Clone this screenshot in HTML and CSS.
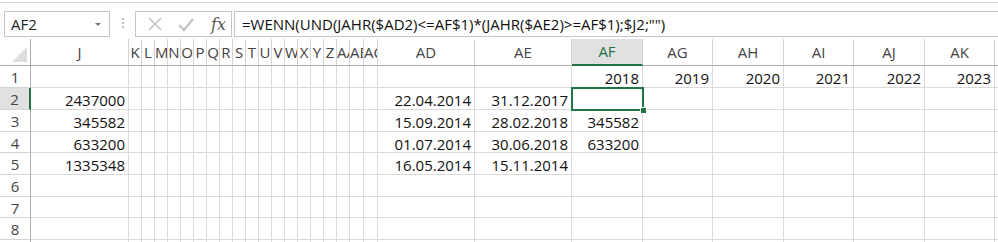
FILE: index.html
```html
<!DOCTYPE html>
<html lang="de">
<head>
  <meta charset="UTF-8" />
  <title>Tabelle</title>
  <link rel="stylesheet" href="styles.css">
</head>
<body>
  <div class="topbar">
    <div class="namebox">
      <span>AF2</span>
      <span class="arrow"></span>
    </div>
    <div class="grip"><i></i><i></i><i></i></div>
    <div class="fxbox">
      <svg class="ico" width="16" height="16" viewBox="0 0 16 16"><path d="M2 2 L14 14 M14 2 L2 14" stroke="#c4c4c4" stroke-width="1.6" fill="none"/></svg>
      <svg class="ico" width="18" height="16" viewBox="0 0 18 16"><path d="M2 9 L7 14 L16 3" stroke="#c4c4c4" stroke-width="2.4" fill="none"/></svg>
      <span class="fx">fx</span>
    </div>
    <div class="formula">=WENN(UND(JAHR($AD2)&lt;=AF$1)*(JAHR($AE2)&gt;=AF$1);$J2;"")</div>
  </div>

  <div class="sheet" id="sheet"></div>

  <script>
    // Spalten
    const cols = ['J','K','L','M','N','O','P','Q','R','S','T','U','V','W','X','Y','Z','AA','AB','AC','AD','AE','AF','AG','AH','AI','AJ','AK',''];
    // Werte
    const data = {
      1: { AF: '2018', AG: '2019', AH: '2020', AI: '2021', AJ: '2022', AK: '2023' },
      2: { J: '2437000', AD: '22.04.2014', AE: '31.12.2017' },
      3: { J: '345582', AD: '15.09.2014', AE: '28.02.2018', AF: '345582' },
      4: { J: '633200', AD: '01.07.2014', AE: '30.06.2018', AF: '633200' },
      5: { J: '1335348', AD: '16.05.2014', AE: '15.11.2014' }
    };
    const sel = { col: 'AF', row: 2 };
    const sheet = document.getElementById('sheet');

    function cell(cls, text) {
      const el = document.createElement('div');
      el.className = cls;
      if (text) el.textContent = text;
      sheet.appendChild(el);
      return el;
    }

    cell('corner');
    cols.forEach(c => cell('colhead' + (c === sel.col ? ' active' : ''), c));

    for (let r = 1; r <= 9; r++) {
      cell('rowhead' + (r === sel.row ? ' active' : ''), String(r));
      cols.forEach(c => {
        const v = (data[r] || {})[c];
        const el = cell('cell', v);
        if (r === sel.row && c === sel.col) {
          el.classList.add('selected');
          const handle = document.createElement('span');
          handle.className = 'handle';
          el.appendChild(handle);
        }
      });
    }
  </script>
</body>
</html>
```

FILE: styles.css
```css
body { margin: 0; background: #fff; font-family: "Open Sans", "Liberation Sans", sans-serif; font-size: 15px; color: #111; overflow: hidden }

/* Formelleiste */
.topbar { display: flex; align-items: flex-start; height: 39px; box-sizing: border-box; padding-top: 9px; border-top: 2px solid #fff; box-shadow: inset 0 1px 0 #d6d6d6 }
.namebox { display: flex; align-items: center; justify-content: space-between; width: 106px; height: 26px; margin-left: 4px; padding: 0 8px 0 6px; box-sizing: border-box; border: 1px solid #c6c6c6; color: #222 }
.namebox .arrow { width: 0; height: 0; border-left: 3px solid transparent; border-right: 3px solid transparent; border-top: 3px solid #777 }
.grip { display: flex; flex-direction: column; gap: 2px; width: 25px; align-items: center; padding-top: 7px }
.grip i { width: 2px; height: 2px; background: #bbb }
.fxbox { display: flex; align-items: center; gap: 14px; width: 97px; height: 26px; box-sizing: border-box; padding-left: 11px; border: 1px solid #c6c6c6 }
.fxbox .fx { font-family: "DejaVu Serif", "Liberation Serif", serif; font-style: italic; font-size: 16px; color: #555; margin-left: 2px }
.formula { flex: 1; height: 26px; margin-left: 2px; padding-left: 7px; box-sizing: border-box; border: 1px solid #c6c6c6; border-right: 0; line-height: 24px; color: #111; white-space: nowrap }

/* Tabelle */
.sheet { display: grid; grid-template-columns: 31px 98px repeat(17, 13px) 14px 14px 97px 97px 71px 70px 71px 70px 71px 70px 1fr; grid-template-rows: 27px 22px 22px 22px 21px 22px 22px 21px 22px 22px }
.sheet > div { box-sizing: border-box; border-right: 1px solid #dadada; border-bottom: 1px solid #dadada; overflow: hidden; white-space: nowrap }

.corner { position: relative; border-color: #ababab !important }
.corner::after { content: ""; position: absolute; right: 3px; bottom: 3px; border-left: 15px solid transparent; border-bottom: 15px solid #dedede }
.colhead { text-align: center; line-height: 27px; color: #444; border-bottom-color: #ababab !important; border-right-color: #d4d4d4 !important }
.rowhead { text-align: center; line-height: 22px; color: #444; border-right-color: #ababab !important; border-bottom-color: #d4d4d4 !important }
.colhead.active { background: #e1e1e1; color: #217346; border-bottom: 2px solid #217346 !important; line-height: 25px }
.rowhead.active { background: #e1e1e1; border-right: 2px solid #217346 !important }

.cell { text-align: right; padding: 2px 3px 0 0; line-height: 20px }
.cell.selected { position: relative; overflow: visible; border: 0; outline: 2px solid #217346; outline-offset: -1px }
.handle { position: absolute; right: -4px; bottom: -4px; width: 5px; height: 5px; background: #217346; border: 1px solid #fff }
```
